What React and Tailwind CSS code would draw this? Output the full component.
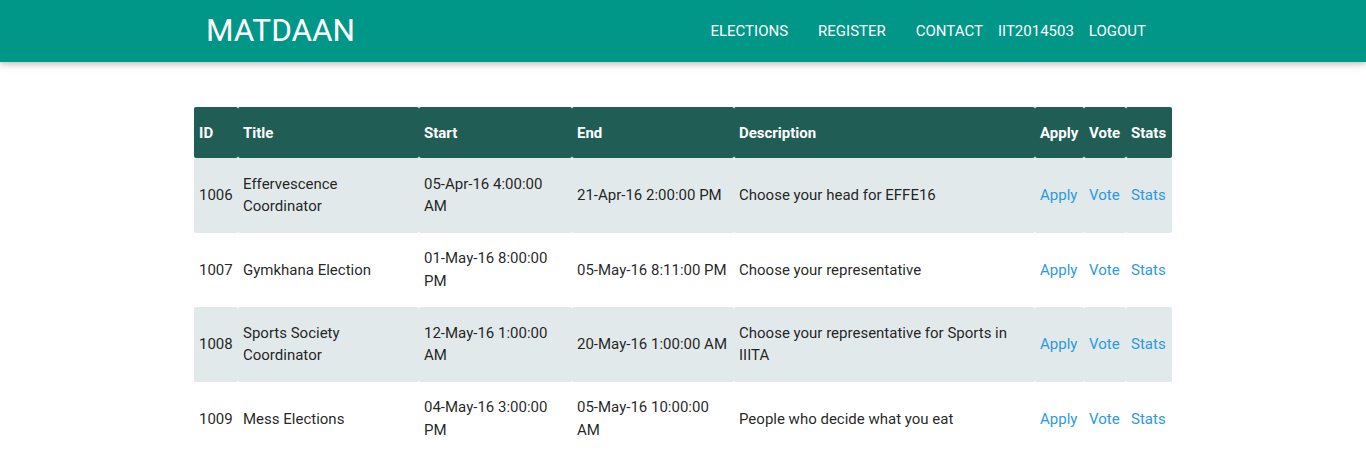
import React from 'react';

const elections = [
  {
    id: 1006,
    title: 'Effervescence Coordinator',
    start: '05-Apr-16 4:00:00 AM',
    end: '21-Apr-16 2:00:00 PM',
    description: 'Choose your head for EFFE16',
  },
  {
    id: 1007,
    title: 'Gymkhana Election',
    start: '01-May-16 8:00:00 PM',
    end: '05-May-16 8:11:00 PM',
    description: 'Choose your representative',
  },
  {
    id: 1008,
    title: 'Sports Society Coordinator',
    start: '12-May-16 1:00:00 AM',
    end: '20-May-16 1:00:00 AM',
    description: 'Choose your representative for Sports in IIITA',
  },
  {
    id: 1009,
    title: 'Mess Elections',
    start: '04-May-16 3:00:00 PM',
    end: '05-May-16 10:00:00 AM',
    description: 'People who decide what you eat',
  },
];

export default function App() {
  const th = 'bg-[#1f5d55] text-white font-bold text-left px-[5px] pt-[16px] pb-[14px] leading-[21px] rounded-[2px]';

  return (
    <div className="min-h-[468px] bg-white text-[15px] leading-[22.5px]" style={{ fontFamily: 'Roboto, "Noto Sans", sans-serif' }}>
      {/* Navbar */}
      <nav className="h-[62px] bg-[#009688] shadow-[0_2px_5px_0_rgba(0,0,0,0.16),0_2px_10px_0_rgba(0,0,0,0.12)] relative z-10">
        <div className="w-[956px] mx-auto h-full flex items-center justify-between">
          <a className="text-white text-[31.5px] leading-none pl-[1px] pb-[1px]">MATDAAN</a>
          <ul className="flex items-center text-white text-[15px] font-normal uppercase">
            <li className="px-[15px]">Elections</li>
            <li className="px-[15px]">Register</li>
            <li className="pl-[15px] pr-[8px]">Contact</li>
            <li className="px-[7px]">IIT2014503</li>
            <li className="pl-[8px] pr-[15px]">Logout</li>
          </ul>
        </div>
      </nav>

      {/* Elections table */}
      <div className="w-[978px] mx-auto mt-[45px]">
        <table className="w-full table-fixed border-separate border-spacing-0 text-[rgba(0,0,0,0.87)]">
          <colgroup>
            <col className="w-[44px]" />
            <col className="w-[181px]" />
            <col className="w-[153px]" />
            <col className="w-[162px]" />
            <col className="w-[301px]" />
            <col className="w-[49px]" />
            <col className="w-[42px]" />
            <col className="w-[46px]" />
          </colgroup>
          <thead>
            <tr>
              <th className={th}>ID</th>
              <th className={th}>Title</th>
              <th className={th}>Start</th>
              <th className={th}>End</th>
              <th className={th}>Description</th>
              <th className={th}>Apply</th>
              <th className={th}>Vote</th>
              <th className={th}>Stats</th>
            </tr>
          </thead>
          <tbody>
            {elections.map((e, index) => {
              const bg = index % 2 === 0 ? 'bg-[#e1e9ea]' : 'bg-white';
              const td = `${bg} px-[5px] py-[14.75px] align-middle rounded-[2px]`;
              return (
                <tr key={e.id}>
                  <td className={td}>{e.id}</td>
                  <td className={td}>{e.title}</td>
                  <td className={td}>{e.start}</td>
                  <td className={td}>{e.end}</td>
                  <td className={td}>{e.description}</td>
                  <td className={`${td} text-[#2b9ae0]`}>Apply</td>
                  <td className={`${td} text-[#2b9ae0]`}>Vote</td>
                  <td className={`${td} text-[#2b9ae0]`}>Stats</td>
                </tr>
              );
            })}
          </tbody>
        </table>
      </div>
    </div>
  );
}
